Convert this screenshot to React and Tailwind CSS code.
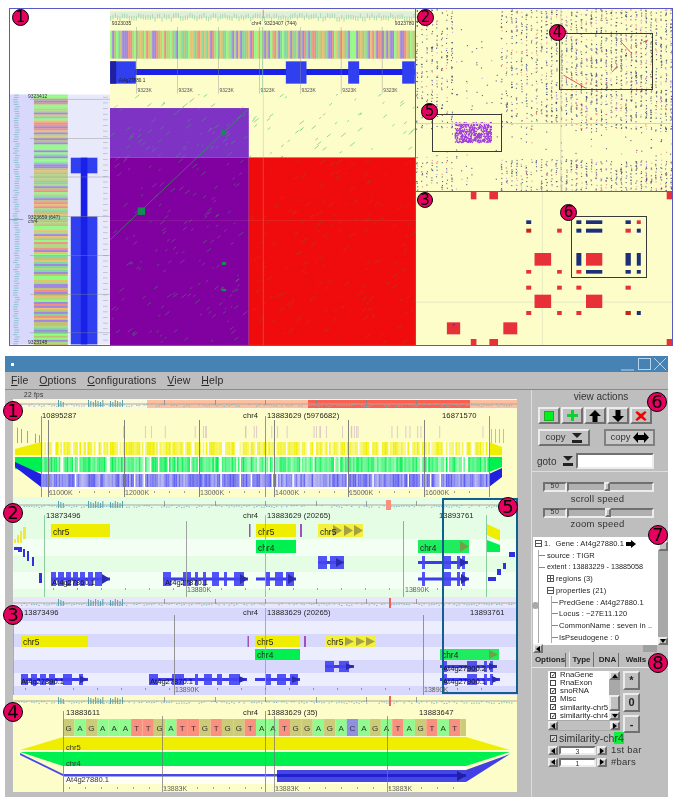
import React from 'react';

const makeRng = (seed) => () => {
  seed = (seed * 16807) % 2147483647;
  return seed / 2147483647;
};

const SEQ = 'GAGAAATTGATTGTGGTAATGGAGACAGATAGTATG';
const BASE_COLORS = { G: '#cccc78', A: '#90fc90', T: '#fc9080', C: '#9090e0' };
const STRIPES = ['#90fc80', '#f09080', '#c0c078', '#a088e0', '#b0d880', '#e8c070', '#80d8a0'];

const Badge = ({ n, className }) => (
  <div className={`absolute rounded-full bg-[#e6005f] border border-black flex items-center justify-center text-black font-['DejaVu_Sans',sans-serif] leading-none ${className}`}>
    {n}
  </div>
);

// --- top figure -------------------------------------------------------------

const TopTrack = () => {
  const r = makeRng(11);
  const stripes = [];
  for (let x = 331; x < 1245; x += 6) stripes.push(<rect key={x} x={x} y={93} width={6.5} height={84} fill={STRIPES[Math.floor(r() * 7)]} />);
  const ticks = [];
  for (let x = 331; x < 1245; x += 7) ticks.push(<rect key={x} x={x} y={52 - r() * 12} width={3} height={14} fill="#a8d8b0" />);
  const grid = [410, 533, 656, 779, 902, 1024, 1147];
  return (
    <svg className="block w-[305px] h-[85px]" viewBox="331 28 914 255">
      <rect x={331} y={28} width={914} height={255} fill="#fdfdc9" />
      <rect x={331} y={35} width={914} height={20} fill="#dfeedd" />
      {ticks}
      <rect x={789} y={30} width={2} height={26} fill="#f05050" />
      <g fontSize="15" fill="#333">
        <text x={336} y={77}>9323035</text>
        <text x={755} y={77}>chr4</text>
        <text x={793} y={77}>9323407 (744)</text>
        <text x={1185} y={77}>9323780</text>
      </g>
      {stripes}
      <rect x={331} y={208} width={914} height={18} fill="#1a20e8" />
      {[[331, 77], [858, 62], [1045, 33], [1207, 38]].map(([x, w]) => (
        <rect key={x} x={x} y={185} width={w} height={67} fill="#3040f0" />
      ))}
      <rect x={331} y={185} width={18} height={67} fill="#2020a0" />
      <text x={357} y={248} fontSize="14" fill="#222">At4g27880.1</text>
      {grid.map((x) => (
        <g key={x}>
          <rect x={x - 1} y={82} width={2} height={200} fill="#8a8a8a" opacity="0.6" />
          <text x={x + 3} y={277} fontSize="15" fill="#555">9323K</text>
        </g>
      ))}
      <rect x={787} y={82} width={3} height={200} fill="#80c0a0" opacity="0.7" />
    </svg>
  );
};

const LeftTrack = () => {
  const r = makeRng(23);
  const stripes = [];
  for (let y = 283; y < 1035; y += 6) stripes.push(<rect key={y} x={102} y={y} width={102} height={6.5} fill={STRIPES[Math.floor(r() * 7)]} />);
  const ticks = [];
  for (let y = 283; y < 1035; y += 7) ticks.push(<rect key={y} x={38 + r() * 8} y={y} width={14} height={3} fill="#90c0d0" />);
  const marks = [];
  for (let y = 290; y < 1035; y += 17) marks.push(<rect key={y} x={310} y={y} width={14} height={2} fill="#b0b0c0" />);
  return (
    <svg className="block w-[100px] h-[251px]" viewBox="30 283 301 752">
      <rect x={30} y={283} width={301} height={752} fill="#e8e9fb" />
      <rect x={30} y={283} width={72} height={752} fill="#d8d8fc" />
      {ticks}
      {marks}
      {stripes}
      <rect x={213} y={473} width={80} height={47} fill="#3040f0" />
      <rect x={213} y={650} width={80} height={385} fill="#3040f0" />
      <rect x={243} y={473} width={20} height={562} fill="#1a20e8" />
      {[297, 415, 531, 650, 767, 884, 1000].map((y) => (
        <rect key={y} x={90} y={y - 1} width={241} height={2} fill="#8a8a8a" opacity="0.6" />
      ))}
      <rect x={30} y={658} width={40} height={2} fill="#f05050" />
      <g fontSize="15" fill="#333">
        <text x={84} y={293}>9323412</text>
        <text x={84} y={657}>9323659 (647)</text>
        <text x={84} y={671}>chr4</text>
        <text x={84} y={1035}>9323148</text>
      </g>
    </svg>
  );
};

const MainPlot = () => {
  const r = makeRng(37);
  const dashes = [];
  for (let i = 0; i < 430; i++) {
    const x = 335 + r() * 905;
    const y = 285 + r() * 745;
    const onRed = x > 747 && y > 473;
    const onPurple = x < 747 && y > 325;
    const l = 5 + r() * 10;
    dashes.push(<line key={i} x1={x} y1={y} x2={x + l} y2={y - l * 0.8} stroke={onRed ? '#a05010' : '#40c060'} strokeWidth="2.5" opacity={onPurple ? 0.45 : 0.7} />);
  }
  return (
    <svg className="block w-[305px] h-[251px]" viewBox="331 283 914 752">
      <rect x={331} y={283} width={914} height={752} fill="#fdfdc9" />
      <rect x={331} y={325} width={416} height={148} fill="#7f33c4" />
      <rect x={331} y={473} width={416} height={562} fill="#8000a0" />
      <rect x={747} y={473} width={498} height={562} fill="#f00c0c" />
      {dashes}
      <line x1={331} y1={720} x2={747} y2={327} stroke="#20a050" strokeWidth="2" />
      <rect x={414} y={623} width={22} height={22} fill="#109050" />
      <rect x={664} y={391} width={14} height={14} fill="#109050" />
      <rect x={666} y={786} width={13} height={9} fill="#109050" />
      <rect x={666} y={867} width={13} height={7} fill="#109050" />
      <rect x={789} y={283} width={3} height={752} fill="#80c0a0" opacity="0.35" />
      <rect x={331} y={661} width={914} height={2} fill="#c08080" opacity="0.25" />
    </svg>
  );
};

const DotPlot = () => {
  const r = makeRng(51);
  const dots = [];
  for (let i = 0; i < 4600; i++) {
    const x = Math.floor(r() * 52) * 5 + r() * 1.2;
    const y = r() * 182;
    const emptyCol = x > 38 && x < 82;
    const emptyRow = y > 120 && y < 150;
    if ((emptyCol || emptyRow) && r() > 0.1) continue;
    if (x < 130 && r() > 0.6) continue;
    const t = r();
    const fill = t < 0.72 ? '#3c4878' : t < 0.86 ? '#f08070' : '#c890e8';
    dots.push(<rect key={i} x={x} y={y} width={1.1} height={1.1} fill={fill} opacity="0.85" />);
  }
  for (let i = 0; i < 520; i++) {
    dots.push(<rect key={`p${i}`} x={39 + Math.floor(r() * 37)} y={113 + r() * 20} width={1.3} height={1.3} fill="#a040d8" />);
  }
  return (
    <svg className="block w-[256px] h-[182px]" viewBox="0 0 257 182" preserveAspectRatio="none">
      <rect width={257} height={182} fill="#fdfdc9" />
      {dots}
      <rect x={145} width={1} height={182} fill="#d8d8b0" />
      <rect y={114} width={257} height={1} fill="#d8d8b0" />
      <g stroke="#f04040" strokeWidth="0.9">
        <line x1={205} y1={32} x2={217} y2={45} />
        <line x1={202} y1={57} x2={197} y2={63} />
        <line x1={148} y1={66} x2={170} y2={79} />
        <line x1={228} y1={33} x2={233} y2={31} />
      </g>
    </svg>
  );
};

const BLOCKS = [
  ['r', 180, 575, 17, 22], ['r', 236, 575, 26, 22], ['r', 770, 575, 20, 22],
  ['n', 347, 660, 15, 11], ['d', 347, 685, 15, 12], ['r', 440, 685, 14, 12],
  ['n', 498, 660, 15, 11], ['n', 527, 660, 49, 11], ['n', 498, 685, 15, 12], ['n', 527, 685, 49, 12],
  ['n', 646, 660, 16, 11], ['r', 680, 660, 12, 11], ['r', 646, 685, 16, 12], ['n', 680, 685, 12, 12],
  ['r', 372, 758, 50, 38], ['n', 498, 758, 15, 38], ['r', 527, 758, 49, 38], ['n', 646, 758, 16, 38], ['n', 680, 758, 12, 38],
  ['r', 347, 809, 15, 11], ['r', 440, 809, 14, 11], ['r', 498, 809, 15, 11], ['n', 527, 809, 49, 11], ['n', 646, 809, 16, 11], ['n', 680, 809, 12, 11],
  ['r', 347, 856, 15, 12], ['r', 440, 856, 14, 12], ['r', 498, 856, 15, 12], ['r', 646, 856, 16, 12],
  ['r', 372, 883, 50, 40], ['r', 527, 883, 49, 40],
  ['r', 347, 932, 15, 12], ['r', 440, 932, 14, 12], ['r', 498, 932, 15, 12], ['d', 646, 932, 16, 12], ['n', 680, 932, 12, 12],
  ['r', 108, 966, 40, 36], ['r', 278, 966, 42, 36],
  ['r', 180, 1016, 17, 19], ['r', 236, 1016, 26, 19], ['r', 770, 1016, 20, 19],
];
const BLOCK_FILL = { r: '#e83038', n: '#1c2f78', d: '#c02818' };

const BlockPlot = () => (
  <svg className="block w-[256px] h-[153px]" viewBox="15 575 771 459" preserveAspectRatio="none">
    <rect x={15} y={575} width={771} height={459} fill="#fdfdc9" />
    <rect x={394} y={575} width={3} height={459} fill="#e8e8c4" />
    <rect x={15} y={904} width={771} height={3} fill="#e8e8c4" />
    {BLOCKS.map(([c, x, y, w, h], i) => <rect key={i} x={x} y={y} width={w} height={h} fill={BLOCK_FILL[c]} />)}
    <rect x={126} y={970} width={6} height={6} fill="#8020c0" />
  </svg>
);

// --- browser tracks ---------------------------------------------------------

const OVERVIEW_MARKS = [151, 202, 252, 303, 353, 403];

const Overview = ({ y, h, seed }) => {
  const r = makeRng(seed);
  const ticks = [[45, 50], [75, 90], [97, 110]].flatMap(([a, b]) => {
    const out = [];
    for (let x = a; x <= b; x += 2.4) out.push(x);
    return out;
  });
  const dots = [];
  for (let x = 3; x < 500; x += 2.5) if (r() > 0.25) dots.push(<rect key={x} x={x} y={y + h - 3 - r() * 2} width={1.4} height={1} fill="#7fb8c8" />);
  return (
    <g>
      <rect x={0} y={y + h / 2 - 0.5} width={504} height={1} fill="#a8a8a0" />
      {dots}
      {ticks.map((x, i) => <rect key={i} x={x} y={y + 1 + (i % 3)} width={0.9} height={h - 3 - (i % 3)} fill="#4f98a8" />)}
      {OVERVIEW_MARKS.map((x) => <rect key={x} x={x} y={y + 1} width={0.8} height={h - 5} fill="#888" />)}
    </g>
  );
};

const Labels = ({ y, left, right, leftX, rightX, mid }) => (
  <g fontSize="7.6" fill="#222" letterSpacing="0.1">
    <text x={leftX} y={y}>{left}</text>
    <text x={230} y={y}>chr4</text>
    <text x={254} y={y}>{mid}</text>
    <text x={rightX} y={y}>{right}</text>
  </g>
);

const Ruler = ({ items, y, from, to, step }) => {
  const marks = [];
  for (let x = from; x < to; x += step) marks.push(<rect key={x} x={x} y={y - 4} width={0.7} height={2} fill="#777" />);
  return (
    <g fontSize="7" fill="#666">
      {marks}
      {items.map(([x, t]) => <text key={x} x={x} y={y}>{t}</text>)}
    </g>
  );
};

const Gene = ({ x0, x1, y, h, exons, label, lx }) => (
  <g>
    <rect x={x0} y={y + h / 2 - 1.5} width={x1 - x0} height={3} fill="#3a3aee" />
    {exons.map(([a, b]) => <rect key={a} x={a} y={y} width={b - a} height={h} fill="#4444f4" opacity="0.92" />)}
    <polygon points={`${x1 - 8},${y + 2} ${x1},${y + h / 2} ${x1 - 8},${y + h - 2}`} fill="#2a2ab0" />
    {label && <text x={lx ?? x0 + 1} y={y + h - 1.5} fontSize="7.6" fill="#111">{label}</text>}
  </g>
);

const Block = ({ x, y, w, h, fill, label, arrows = [] }) => (
  <g>
    <rect x={x} y={y} width={w} height={h} fill={fill} />
    {arrows.map((a) => <polygon key={a} points={`${a},${y + 1} ${a + 9},${y + h / 2} ${a},${y + h - 1}`} fill="#8a8a40" opacity="0.75" />)}
    <text x={x + 2} y={y + h - 2.5} fontSize="8.4" fill="#222">{label}</text>
  </g>
);

const Panel1 = () => {
  const r = makeRng(71);
  const band = (y, h, color, key, keep, minOp) => {
    const out = [];
    for (let x = 28; x < 476; x += 1.6) {
      if (r() < keep) out.push(<rect key={`${key}${x}`} x={x} y={y} width={1.7} height={h} fill={color} opacity={minOp + r() * (1 - minOp)} />);
    }
    return out;
  };
  const pale = [];
  for (let i = 0; i < 34; i++) pale.push(<rect key={i} x={110 + r() * 360} y={27} width={0.9} height={12} fill="#d8b8c8" opacity="0.8" />);
  return (
    <svg className="block w-[504px] h-[98px]" viewBox="0 0 504 98">
      <rect width={504} height={98} fill="#fdfdc9" />
      <rect width={504} height={10} fill="#fbf8dc" />
      <rect x={134} y={1} width={370} height={8} fill="#fcc0a0" />
      <rect x={295} y={1} width={162} height={8} fill="#fc6050" />
      <Overview y={0} h={10} seed={5} />
      {[2, 6, 12, 20, 24].map((x) => <rect key={x} x={x + 2} y={28 + x / 3} width={1} height={16 - x / 3} fill="#c090b0" />)}
      {[478, 482, 486, 490].map((x) => <rect key={x} x={x} y={30} width={1} height={14} fill="#c090b0" opacity="0.7" />)}
      {pale}
      <rect x={28} y={42} width={448} height={48} fill="#fffff4" />
      <polygon points="2,50 28,43 28,56 2,56" fill="#f0ee00" />
      <polygon points="476,43 489,48 489,56 476,56" fill="#f0ee00" />
      <polygon points="2,58 28,58 28,73 2,70" fill="#00f050" />
      <polygon points="476,58 489,58 489,68 476,73" fill="#00f050" />
      <polygon points="2,63 28,75 28,88 2,68" fill="#2020e0" />
      <polygon points="476,75 489,69 489,78 476,88" fill="#2020e0" />
      {band(43, 13, '#f0ee00', 'y', 0.72, 0.4)}
      {band(58, 15, '#00f050', 'g', 0.88, 0.35)}
      {band(75, 13, '#5a5aee', 'b', 0.94, 0.4)}
      {[35, 111, 186, 261, 335, 411].map((x) => <rect key={x} x={x} y={21} width={0.9} height={77} fill="#777" />)}
      {[28, 252, 476].map((x) => <rect key={x} x={x} y={17} width={0.9} height={81} fill="#58a878" />)}
      <Labels y={19} leftX={29} left="10895287" mid="13883629 (5976682)" rightX={429} right="16871570" />
      <Ruler y={96} from={36} to={470} step={15} items={[[36, '11000K'], [112, '12000K'], [187, '13000K'], [262, '14000K'], [336, '15000K'], [412, '16000K']]} />
    </svg>
  );
};

const Panel2 = () => (
  <svg className="block w-[504px] h-[100px]" viewBox="0 0 504 100">
    <rect width={504} height={100} fill="#e4fde4" />
    {[[42, 17], [75, 17]].map(([y, h]) => <rect key={y} y={y} width={504} height={h} fill="#f3fff3" />)}
    <Overview y={3} h={10} seed={7} />
    <rect x={373} y={3} width={5} height={10} fill="#f89080" />
    <Labels y={21} leftX={33} left="13873496" mid="13883629 (20265)" rightX={426} right="13893761" />
    <Block x={38} y={27} w={59} h={13} fill="#f0ee00" label="chr5" />
    <rect x={236} y={27} width={1.5} height={13} fill="#a050c0" />
    <Block x={243} y={27} w={40} h={13} fill="#f0ee00" label="chr5" />
    <rect x={287} y={27} width={2} height={13} fill="#a050c0" />
    <Block x={305} y={27} w={45} h={13} fill="#f4f040" label="chr5" arrows={[320, 331, 341]} />
    <Block x={243} y={43} w={40} h={13} fill="#00f050" label="chr4" />
    <Block x={405} y={43} w={51} h={13} fill="#20ec60" label="chr4" arrows={[447]} />
    <Gene x0={305} x1={331} y={59} h={13} exons={[[305, 314], [317, 325], [325, 331]]} />
    <Gene x0={405} x1={455} y={59} h={13} exons={[[409, 412], [430, 438], [444, 447], [449, 452]]} />
    <Gene x0={38} x1={97} y={75} h={14} label="At4g27860.1" lx={39} exons={[[38, 43], [45, 51], [53, 58], [60, 65], [67, 72], [75, 80], [82, 89]]} />
    <Gene x0={150} x1={235} y={75} h={14} label="At4g27870.1" lx={152} exons={[[150, 158], [170, 178], [182, 185], [190, 193], [199, 206], [211, 214], [221, 231]]} />
    <Gene x0={243} x1={283} y={75} h={14} exons={[[252, 257], [262, 270], [273, 281]]} />
    <Gene x0={405} x1={456} y={75} h={14} exons={[[409, 412], [430, 438], [444, 447], [449, 452]]} />
    <polygon points="474,27 487,33 487,44 474,38" fill="#f0ee00" />
    <polygon points="474,43 487,48 487,55 474,55" fill="#00f050" />
    {[[1, 42, 2, 4], [4, 38, 2, 8], [7, 34, 2, 12], [10, 30, 3, 12]].map(([x, y, w, h]) => <rect key={x} x={x} y={y} width={w} height={h} fill="#f0e840" />)}
    {[[1, 50, 4, 3], [5, 50, 4, 5], [10, 52, 2, 8], [14, 54, 2, 10], [19, 60, 2, 9], [26, 76, 3, 10]].map(([x, y, w, h]) => <rect key={x} x={x} y={y} width={w} height={h} fill="#3030e0" />)}
    {[[475, 80, 8, 4], [484, 72, 4, 6], [490, 66, 3, 6], [496, 55, 6, 5]].map(([x, y, w, h]) => <rect key={x} x={x} y={y} width={w} height={h} fill="#3030e0" />)}
    {[173, 390].map((x) => <rect key={x} x={x} y={24} width={0.9} height={76} fill="#999" />)}
    {[31, 252, 473].map((x) => <rect key={x} x={x} y={18} width={0.9} height={82} fill="#80c898" />)}
    <Ruler y={95} from={40} to={470} step={24} items={[[174, '13880K'], [392, '13890K']]} />
  </svg>
);

const Panel3 = () => (
  <svg className="block w-[504px] h-[98px]" viewBox="0 0 504 98">
    <rect width={504} height={98} fill="#d8d8fc" />
    {[[24, 13], [50, 13], [76, 13]].map(([y, h]) => <rect key={y} y={y} width={504} height={h} fill="#ecedfd" />)}
    <rect width={504} height={11} fill="#e8e8fa" />
    <Overview y={1} h={10} seed={9} />
    <rect x={376} y={1} width={2} height={10} fill="#f06060" />
    <Labels y={18} leftX={11} left="13873496" mid="13883629 (20265)" rightX={457} right="13893761" />
    <Block x={8} y={39} w={67} h={11} fill="#f0ee00" label="chr5" />
    <rect x={234.5} y={39} width={1.5} height={11} fill="#a050c0" />
    <Block x={242} y={39} w={45} h={11} fill="#f0ee00" label="chr5" />
    <rect x={291} y={39} width={2} height={11} fill="#a050c0" />
    <Block x={312} y={39} w={51} h={11} fill="#f4f040" label="chr5" arrows={[332, 343, 353]} />
    <Block x={242} y={52} w={45} h={11} fill="#00f050" label="chr4" />
    <Block x={427} y={52} w={59} h={11} fill="#20ec60" label="chr4" arrows={[476]} />
    <Gene x0={312} x1={341} y={64} h={11} exons={[[312, 321], [326, 336]]} />
    <Gene x0={427} x1={484} y={64} h={11} label="At4g27900.2" lx={430} exons={[[431, 434], [454, 464], [471, 474], [477, 480]]} />
    <Gene x0={8} x1={75} y={77} h={11} label="At4g27890.1" lx={8} exons={[[8, 15], [18, 24], [27, 33], [36, 42], [50, 59], [66, 70]]} />
    <Gene x0={136} x1={234} y={77} h={11} label="At4g27870.1" lx={137} exons={[[136, 145], [159, 171], [182, 185], [191, 199], [204, 209], [216, 227]]} />
    <Gene x0={242} x1={287} y={77} h={11} exons={[[253, 258], [264, 273], [277, 285]]} />
    <Gene x0={427} x1={487} y={77} h={11} label="At4g27900.1" lx={430} exons={[[431, 434], [454, 464], [471, 474], [477, 480]]} />
    {[161, 410].map((x) => <rect key={x} x={x} y={18} width={0.9} height={80} fill="#8a8a8a" />)}
    <rect x={252} y={11} width={0.9} height={87} fill="#70c0a8" />
    <rect x={0} y={11} width={0.9} height={87} fill="#70c0a8" />
    <Ruler y={95} from={12} to={490} step={24} items={[[162, '13890K'], [411, '13890K']]} />
  </svg>
);

const Panel4 = () => {
  const cw = 403 / 35.5;
  return (
    <svg className="block w-[504px] h-[97px]" viewBox="0 0 504 97">
      <rect width={504} height={97} fill="#fdfdc9" />
      <Overview y={1} h={10} seed={13} />
      <rect x={376} y={1} width={2} height={10} fill="#f06060" />
      <Labels y={20} leftX={53} left="13883611" mid="13883629 (35)" rightX={406} right="13883647" />
      {SEQ.split('').map((b, i) => (
        <g key={i}>
          <rect x={50 + i * cw} y={24} width={Math.min(cw, 453 - (50 + i * cw))} height={17} fill={BASE_COLORS[b]} />
          {i < 35 && <text x={50 + i * cw + cw / 2} y={36} fontSize="8" fill="#333" textAnchor="middle">{b}</text>}
        </g>
      ))}
      <rect x={50} y={71} width={403} height={18} fill="#fffff4" />
      <polygon points="7,55 50,42 453,42 497,55" fill="#f0ee00" />
      <polygon points="7,57 497,57 453,71 50,71" fill="#00f050" />
      <polygon points="7,58 50,79 50,81 7,60" fill="#4848e8" />
      <rect x={50} y={79} width={215} height={2.5} fill="#4848e8" />
      <rect x={264} y={75} width={189} height={12} fill="#3c3ce0" opacity="0.95" />
      <rect x={264} y={79} width={189} height={3} fill="#2020d0" />
      <polygon points="453,75 497,59 453,87" fill="#4040e4" />
      <polygon points="444,76 453,81 444,86" fill="#2020a0" />
      <g fontSize="7.6" fill="#333">
        <text x={53} y={55}>chr5</text>
        <text x={53} y={71}>chr4</text>
        <text x={53} y={87}>At4g27880.1</text>
      </g>
      {[149, 261, 374].map((x) => <rect key={x} x={x} y={21} width={0.9} height={76} fill="#777" opacity="0.8" />)}
      {[50, 252].map((x) => <rect key={x} x={x} y={16} width={0.9} height={81} fill="#58a878" />)}
      <Ruler y={96} from={56} to={450} step={16} items={[[150, '13883K'], [262, '13883K'], [375, '13883K']]} />
    </svg>
  );
};

// --- controls ---------------------------------------------------------------

const raised = 'bg-[#c0c0c0] border-2 border-t-[#ececec] border-l-[#ececec] border-r-[#707070] border-b-[#707070]';
const sunken = 'border-2 border-t-[#707070] border-l-[#707070] border-r-[#ececec] border-b-[#ececec]';

const MenuItem = ({ first, rest }) => (
  <span><span className="underline">{first}</span>{rest}</span>
);

const ActionButton = ({ children }) => (
  <button className={`w-[22px] h-[17px] flex items-center justify-center ${raised}`}>{children}</button>
);

const TrayIcon = () => (
  <svg width="12" height="10" viewBox="0 0 12 10">
    <polygon points="1,0 11,0 6,5" fill="#222" />
    <rect x={1} y={7} width={10} height={3} fill="#222" />
  </svg>
);

const Slider = ({ thumb }) => (
  <div className="flex items-center pl-[11px] h-[9px]">
    <div className={`w-[24px] h-[10px] flex items-center justify-center text-[7px] tracking-widest text-[#333] ${sunken} border`}>50</div>
    <div className={`w-[87px] h-[10px] flex items-center ${sunken} border bg-[#b0b0b0]`}>
      <div className={`w-[6px] h-[9px] ${raised} border ${thumb}`} />
    </div>
  </div>
);

const TreeRow = ({ children, className = '' }) => (
  <div className={`h-[11.7px] flex items-center whitespace-nowrap ${className}`}>{children}</div>
);

const Dash = () => <span className="w-[6px] border-t border-[#888] mr-[1px] shrink-0" />;

const PlusBox = ({ minus }) => (
  <span className="w-[7px] h-[7px] border border-[#555] flex items-center justify-center relative mr-[2px] shrink-0">
    <span className="w-[5px] border-t border-[#555]" />
    {!minus && <span className="absolute h-[5px] border-l border-[#555]" />}
  </span>
);

const Arrow = ({ dir }) => (
  <div className={`w-[10px] h-[9px] flex items-center justify-center shrink-0 ${raised} border`}>
    <div className={dir === 'left'
      ? 'w-0 h-0 border-y-[3px] border-y-transparent border-r-[4px] border-r-black'
      : 'w-0 h-0 border-y-[3px] border-y-transparent border-l-[4px] border-l-black'} />
  </div>
);

const ListRow = ({ checked, label }) => (
  <div className="h-[8.1px] flex items-center gap-[4px] pl-[2px] whitespace-nowrap">
    <span className="w-[6px] h-[6px] shrink-0 border border-[#444] bg-white flex items-center justify-center text-[6px] leading-none text-black">{checked ? '✓' : ''}</span>
    <span className="text-[7.8px] leading-none text-[#222]">{label}</span>
  </div>
);

const SideButton = ({ children, className = '' }) => (
  <button className={`w-[17px] flex items-center justify-center text-[11px] font-bold text-[#222] ${raised} ${className}`}>{children}</button>
);

const Spinner = ({ value, label }) => (
  <div className="flex items-center h-[10px] pl-[16px] mt-[1.5px]">
    <Arrow dir="left" />
    <div className={`w-[37px] h-[9px] mx-[1px] bg-white text-center text-[7px] leading-[8px] text-[#333] ${sunken} border`}>{value}</div>
    <Arrow dir="right" />
    <span className="ml-[4px] text-[9.5px] text-[#333] tracking-wide">{label}</span>
  </div>
);

const RightColumn = () => (
  <div className="w-[137px] flex flex-col border-l border-[#dcdcdc]">
    <div className="h-[82px] border-b border-[#dcdcdc] shrink-0">
      <div className="text-center text-[10px] leading-[14px] text-[#333] pl-[2px]">view actions</div>
      <div className="flex gap-[1px] pl-[6px] mt-[3px]">
        <ActionButton><span className="w-[10px] h-[10px] bg-[#00f020] border border-[#22aa22]" /></ActionButton>
        <ActionButton>
          <svg width="11" height="11" viewBox="0 0 11 11"><path d="M4 0h3v4h4v3H7v4H4V7H0V4h4z" fill="#10d030" /></svg>
        </ActionButton>
        <ActionButton>
          <svg width="12" height="12" viewBox="0 0 12 12"><path d="M6 0l6 6H8.5v6h-5V6H0z" fill="#000" /></svg>
        </ActionButton>
        <ActionButton>
          <svg width="12" height="12" viewBox="0 0 12 12"><path d="M6 12l6-6H8.5V0h-5v6H0z" fill="#000" /></svg>
        </ActionButton>
        <ActionButton>
          <svg width="12" height="12" viewBox="0 0 12 12"><path d="M2 1l4 3 4-3 1.5 1.5L8 6l3.5 3.5L10 11 6 8l-4 3-1.5-1.5L4 6 .5 2.5z" fill="#f00000" /></svg>
        </ActionButton>
      </div>
      <div className="flex justify-between pl-[6px] pr-[13px] mt-[5px]">
        <button className={`w-[52px] h-[17px] flex items-center justify-center gap-[5px] text-[9.5px] text-[#333] ${raised}`}>copy <TrayIcon /></button>
        <button className="w-[51px] h-[17px] flex items-center justify-center gap-[2px] text-[9.5px] text-[#333] bg-[#c8c8c8] border-2 border-[#808080]">
          copy
          <svg width="16" height="11" viewBox="0 0 16 11"><path d="M0 5.5L5 0v3h6V0l5 5.5L11 11V8H5v3z" fill="#000" /></svg>
        </button>
      </div>
      <div className="flex items-center pl-[5px] mt-[7px]">
        <span className="text-[10px] text-[#333] w-[25px]">goto</span>
        <TrayIcon />
        <div className={`ml-[2px] w-[78px] h-[16px] bg-white ${sunken}`} />
      </div>
    </div>
    <div className="h-[65px] shrink-0 pt-[10px]">
      <Slider thumb="ml-[35px]" />
      <div className="text-center text-[9.5px] leading-[12px] mt-[2px] text-[#333] tracking-wide pr-[5px]">scroll speed</div>
      <div className="mt-[3px]"><Slider thumb="ml-[36px]" /></div>
      <div className="text-center text-[9.5px] leading-[12px] mt-[1px] text-[#333] tracking-wide pr-[5px]">zoom speed</div>
    </div>
    <div className="h-[115px] shrink-0 flex flex-col pl-[1px]">
      <div className="flex flex-1 min-h-0">
        <div className="flex-1 min-w-0 bg-white overflow-hidden pl-[2px] pt-[1px] text-[7.5px] text-[#222] tracking-[0.1px]">
          <TreeRow>
            <PlusBox minus />
            <span className="mr-[5px]">1.</span>
            <span>Gene : At4g27880.1</span>
            <svg className="ml-[2px]" width="10" height="8" viewBox="0 0 10 8"><path d="M0 2h5V0l5 4-5 4V6H0z" fill="#000" /></svg>
          </TreeRow>
          <div className="ml-[3px] border-l border-[#aaa]">
            <TreeRow><Dash /><span className="ml-[1px]">source : TIGR</span></TreeRow>
            <TreeRow><Dash /><span className="ml-[1px] text-[7.2px] tracking-normal">extent : 13883229 - 13885058</span></TreeRow>
            <TreeRow><span className="w-[8px]" /><PlusBox />regions (3)</TreeRow>
            <TreeRow><span className="w-[8px]" /><PlusBox minus />properties (21)</TreeRow>
            <div className="ml-[12px] border-l border-[#aaa]">
              <TreeRow><Dash />PredGene : At4g27880.1</TreeRow>
              <TreeRow><Dash />Locus : ~27E11.120</TreeRow>
              <TreeRow><Dash />CommonName : seven in ..</TreeRow>
              <TreeRow><Dash />IsPseudogene : 0</TreeRow>
            </div>
          </div>
        </div>
        <div className="w-[10px] bg-[#a8a8a8] flex flex-col">
          <div className={`h-[10px] mt-[4px] ${raised} border`} />
          <div className="flex-1" />
          <div className={`h-[8px] flex items-center justify-center ${raised} border`}>
            <div className="w-0 h-0 border-x-[3px] border-x-transparent border-t-[4px] border-t-black" />
          </div>
        </div>
      </div>
      <div className="h-[7px] shrink-0 bg-[#c0c0c0] flex items-center">
        <Arrow dir="left" />
        <div className="w-[100px]" />
        <div className="w-[14px] h-[7px] bg-[#a0a0a0]" />
      </div>
    </div>
    <div className="h-[15px] shrink-0 flex items-end text-[8px] font-bold text-[#222] pl-[3px] gap-[3px]">
      <div className="w-[31px] h-[14px] flex items-center justify-center border-r border-[#707070]">Options</div>
      <div className="w-[25px] h-[15px] flex items-center justify-center border-r border-l border-[#707070] border-l-[#ececec]">Type</div>
      <div className="w-[22px] h-[14px] flex items-center justify-center border-r border-[#707070]">DNA</div>
      <div className="w-[28px] h-[14px] flex items-center justify-center">Walls</div>
    </div>
    <div className="flex-1 border-t border-[#e8e8e8] pt-[3px]">
      <div className="flex pl-[16px]">
        <div className="flex flex-col">
          <div className="flex h-[49px]">
            <div className="w-[61px] bg-white overflow-hidden">
              <ListRow checked label="RnaGene" />
              <ListRow label="RnaExon" />
              <ListRow checked label="snoRNA" />
              <ListRow checked label="Misc" />
              <ListRow checked label="similarity-chr5" />
              <ListRow checked label="similarity-chr4" />
            </div>
            <div className="w-[11px] flex flex-col bg-[#a8a8a8]">
              <div className={`h-[9px] flex items-center justify-center ${raised} border`}>
                <div className="w-0 h-0 border-x-[3px] border-x-transparent border-b-[4px] border-b-black" />
              </div>
              <div className="h-[15px]" />
              <div className={`h-[16px] ${raised} border`} />
              <div className={`h-[9px] flex items-center justify-center ${raised} border`}>
                <div className="w-0 h-0 border-x-[3px] border-x-transparent border-t-[4px] border-t-black" />
              </div>
            </div>
          </div>
          <div className="flex items-center h-[11px] w-[72px] bg-[#a8a8a8]">
            <Arrow dir="left" />
            <div className="flex-1 h-[9px] bg-[#c0c0c0]" />
            <Arrow dir="right" />
          </div>
        </div>
        <div className="ml-[3px] flex flex-col gap-[3px]">
          <SideButton className="h-[19px]">*</SideButton>
          <SideButton className="h-[19px]">0</SideButton>
          <SideButton className="h-[18px]">-</SideButton>
        </div>
      </div>
      <div className="flex items-center h-[11px] pl-[18px]">
        <span className="w-[7px] h-[7px] border border-[#444] bg-[#d8d8d8] text-[6px] leading-none flex items-center justify-center text-black">✓</span>
        <span className="ml-[2px] text-[10.5px] text-[#333]">similarity-ch<span className="bg-[#10f040]">r4</span></span>
      </div>
      <Spinner value="3" label="1st bar" />
      <Spinner value="1" label="#bars" />
    </div>
  </div>
);

const App = () => (
  <div className="relative w-[679px] h-[803px] overflow-hidden bg-white font-['Liberation_Sans',sans-serif] blur-[0.4px]">
    {/* published figure */}
    <div className="ml-[9px] pt-[8px]">
      <div className="w-[664px] h-[338px] border border-[#5a5ac4] flex">
        <div className="w-[405px] flex shrink-0">
          <div className="w-[100px] shrink-0 flex flex-col">
            <div className="h-[85px] bg-white" />
            <LeftTrack />
          </div>
          <div className="flex flex-col">
            <TopTrack />
            <MainPlot />
          </div>
        </div>
        <div className="flex flex-col border-l border-[#5a5ac4]">
          <DotPlot />
          <div className="h-[1px] bg-[#5a5ac4]" />
          <BlockPlot />
        </div>
      </div>
    </div>

    {/* browser window */}
    <div className="ml-[5px] mt-[10px] w-[663px] h-[441px] bg-[#bebebe] flex flex-col">
      <div className="h-[16px] shrink-0 bg-[#4682b4] flex items-center justify-between pl-[6px] pr-[1px]">
        <span className="w-[3px] h-[3px] bg-white" />
        <svg width="46" height="14" viewBox="0 0 46 14" fill="none" stroke="#b8d4ec">
          <line x1="0" y1="13" x2="13" y2="13" />
          <rect x="17.5" y="1.5" width="12" height="11" />
          <path d="M33 1l12 12M45 1L33 13" />
        </svg>
      </div>
      <div className="h-[18px] shrink-0 flex items-center gap-[11px] pl-[6px] border-b border-[#8a8a8a] text-[10.5px] text-[#2a2a2a] tracking-[0.1px]">
        <MenuItem first="F" rest="ile" />
        <MenuItem first="O" rest="ptions" />
        <MenuItem first="C" rest="onfigurations" />
        <MenuItem first="V" rest="iew" />
        <MenuItem first="H" rest="elp" />
      </div>
      <div className="flex flex-1 min-h-0">
        <div className="w-[526px] shrink-0 pl-[8px]">
          <div className="h-[9px] pl-[11px] text-[6.5px] leading-[9px] text-[#333] tracking-[0.3px]">22 fps</div>
          <Panel1 />
          <Panel2 />
          <Panel3 />
          <Panel4 />
        </div>
        <RightColumn />
      </div>
    </div>

    {/* annotations drawn over the figure */}
    <div className="absolute left-[442px] top-[498px] w-[76px] h-[196px] border-2 border-[#0f5f8f]" />
    <div className="absolute left-[559px] top-[33px] w-[94px] h-[57px] border-[1.5px] border-[#3a3a3a]" />
    <div className="absolute left-[432px] top-[114px] w-[70px] h-[38px] border-[1.5px] border-[#3a3a3a]" />
    <div className="absolute left-[571px] top-[216px] w-[76px] h-[62px] border-[1.5px] border-[#3a3a3a]" />
    <div className="absolute left-[532px] top-[602px] w-[7px] h-[7px] rounded-full bg-[#a8a8a8]" />

    <Badge n="1" className="left-[12px] top-[9px] w-[17px] h-[17px] text-[15px]" />
    <Badge n="2" className="left-[417px] top-[9px] w-[17px] h-[17px] text-[15px]" />
    <Badge n="3" className="left-[417px] top-[192px] w-[16px] h-[16px] text-[15px]" />
    <Badge n="4" className="left-[549px] top-[24px] w-[17px] h-[17px] text-[15px]" />
    <Badge n="5" className="left-[421px] top-[103px] w-[17px] h-[17px] text-[15px]" />
    <Badge n="6" className="left-[560px] top-[204px] w-[17px] h-[17px] text-[15px]" />
    <Badge n="1" className="left-[3px] top-[401px] w-[20px] h-[20px] text-[18px]" />
    <Badge n="2" className="left-[3px] top-[503px] w-[20px] h-[20px] text-[18px]" />
    <Badge n="3" className="left-[3px] top-[605px] w-[20px] h-[20px] text-[18px]" />
    <Badge n="4" className="left-[3px] top-[702px] w-[20px] h-[20px] text-[18px]" />
    <Badge n="5" className="left-[498px] top-[497px] w-[20px] h-[20px] text-[18px]" />
    <Badge n="6" className="left-[647px] top-[392px] w-[20px] h-[20px] text-[18px]" />
    <Badge n="7" className="left-[648px] top-[525px] w-[20px] h-[20px] text-[18px]" />
    <Badge n="8" className="left-[648px] top-[653px] w-[20px] h-[20px] text-[18px]" />
  </div>
);

export default App;
